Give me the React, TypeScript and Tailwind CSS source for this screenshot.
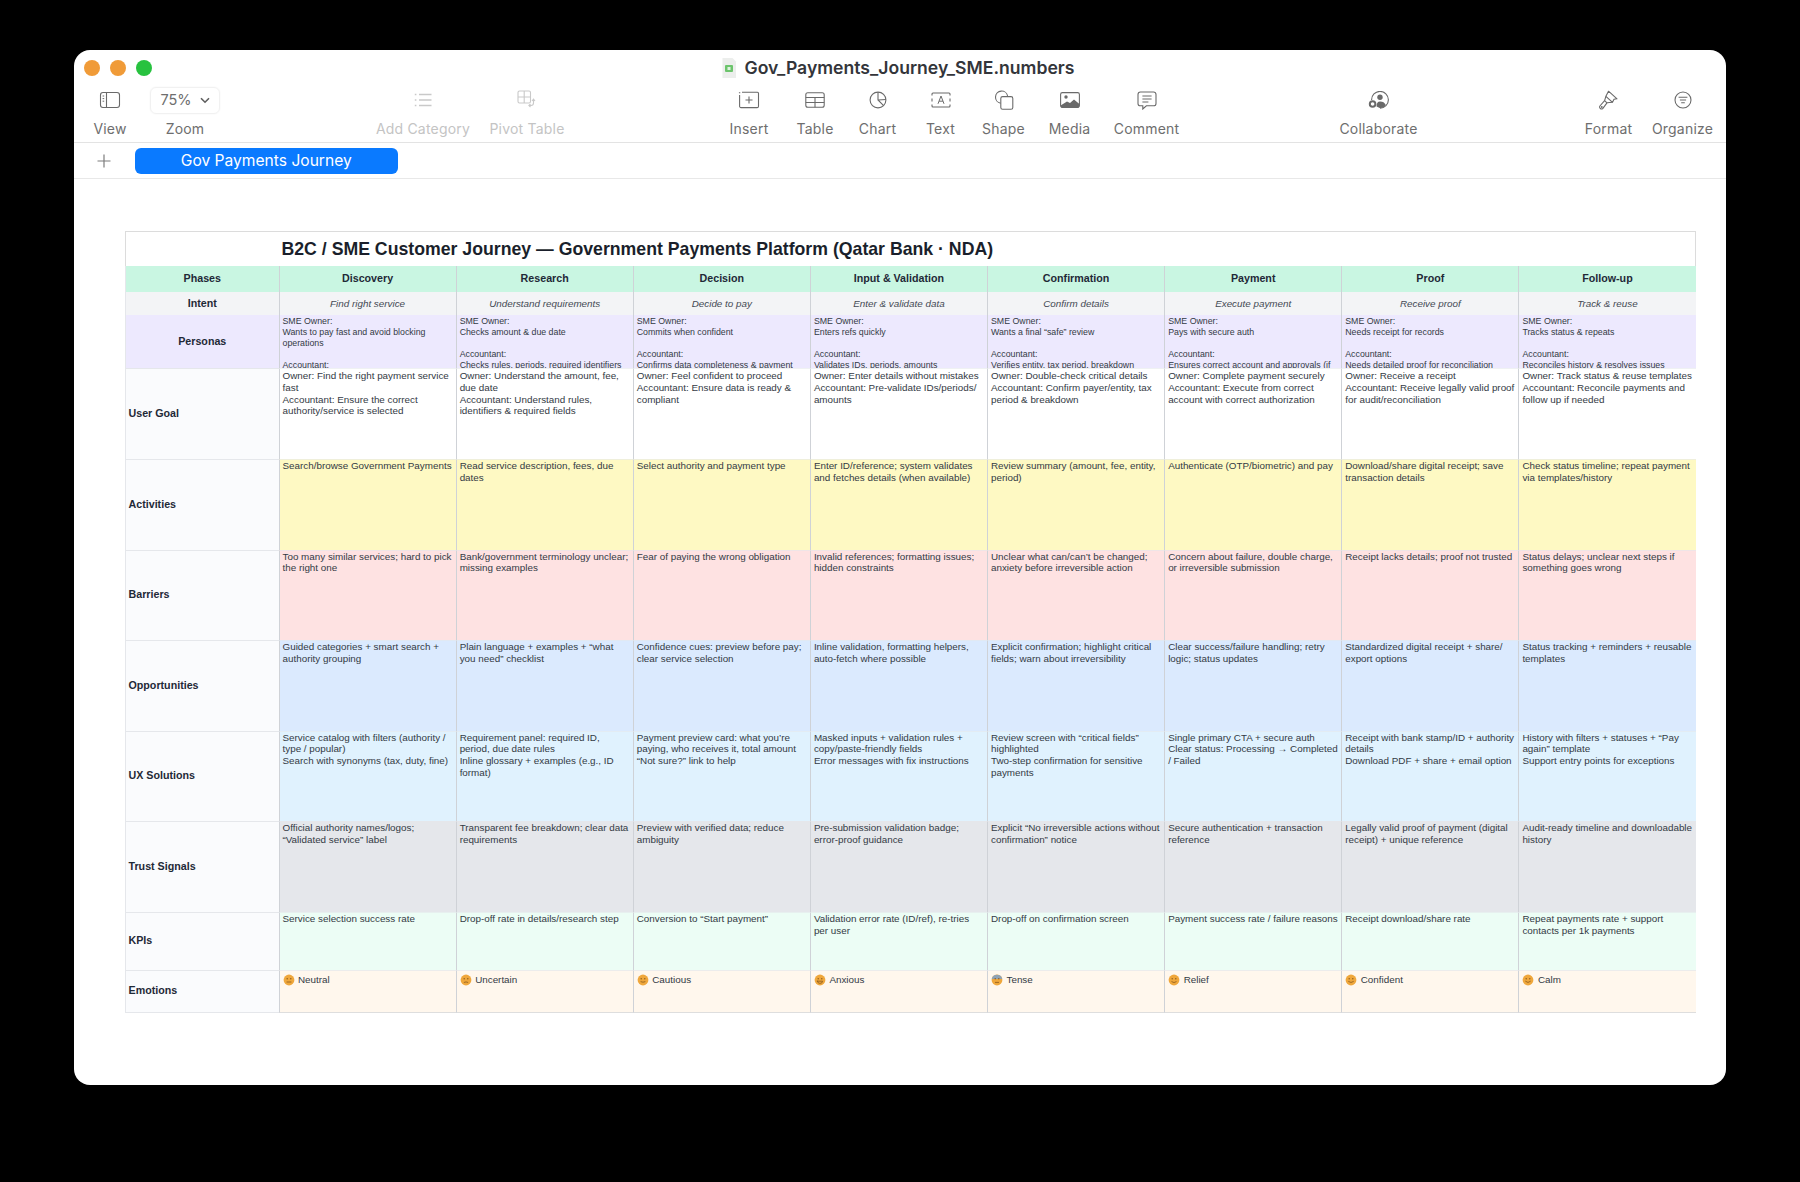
const phases = ["Discovery", "Research", "Decision", "Input & Validation", "Confirmation", "Payment", "Proof", "Follow-up"];

const intents = ["Find right service", "Understand requirements", "Decide to pay", "Enter & validate data", "Confirm details", "Execute payment", "Receive proof", "Track & reuse"];

const personas = [
  "SME Owner:\nWants to pay fast and avoid blocking operations\n\nAccountant:",
  "SME Owner:\nChecks amount & due date\n\nAccountant:\nChecks rules, periods, required identifiers",
  "SME Owner:\nCommits when confident\n\nAccountant:\nConfirms data completeness & payment",
  "SME Owner:\nEnters refs quickly\n\nAccountant:\nValidates IDs, periods, amounts",
  "SME Owner:\nWants a final “safe” review\n\nAccountant:\nVerifies entity, tax period, breakdown",
  "SME Owner:\nPays with secure auth\n\nAccountant:\nEnsures correct account and approvals (if",
  "SME Owner:\nNeeds receipt for records\n\nAccountant:\nNeeds detailed proof for reconciliation",
  "SME Owner:\nTracks status & repeats\n\nAccountant:\nReconciles history & resolves issues",
];

const rows = [
  {
    label: "User Goal",
    h: "h-[91px]",
    bg: "bg-white pt-[1px]",
    cells: [
      "Owner: Find the right payment service fast\nAccountant: Ensure the correct authority/service is selected",
      "Owner: Understand the amount, fee, due date\nAccountant: Understand rules, identifiers & required fields",
      "Owner: Feel confident to proceed\nAccountant: Ensure data is ready & compliant",
      "Owner: Enter details without mistakes\nAccountant: Pre-validate IDs/periods/ amounts",
      "Owner: Double-check critical details\nAccountant: Confirm payer/entity, tax period & breakdown",
      "Owner: Complete payment securely\nAccountant: Execute from correct account with correct authorization",
      "Owner: Receive a receipt\nAccountant: Receive legally valid proof for audit/reconciliation",
      "Owner: Track status & reuse templates\nAccountant: Reconcile payments and follow up if needed",
    ],
  },
  {
    label: "Activities",
    h: "h-[90.5px]",
    bg: "bg-[#fef9c3]",
    cells: [
      "Search/browse Government Payments",
      "Read service description, fees, due dates",
      "Select authority and payment type",
      "Enter ID/reference; system validates and fetches details (when available)",
      "Review summary (amount, fee, entity, period)",
      "Authenticate (OTP/biometric) and pay",
      "Download/share digital receipt; save transaction details",
      "Check status timeline; repeat payment via templates/history",
    ],
  },
  {
    label: "Barriers",
    h: "h-[90.5px]",
    bg: "bg-[#fee2e2]",
    cells: [
      "Too many similar services; hard to pick the right one",
      "Bank/government terminology unclear; missing examples",
      "Fear of paying the wrong obligation",
      "Invalid references; formatting issues; hidden constraints",
      "Unclear what can/can’t be changed; anxiety before irreversible action",
      "Concern about failure, double charge, or irreversible submission",
      "Receipt lacks details; proof not trusted",
      "Status delays; unclear next steps if something goes wrong",
    ],
  },
  {
    label: "Opportunities",
    h: "h-[90.5px]",
    bg: "bg-[#dbeafe]",
    cells: [
      "Guided categories + smart search + authority grouping",
      "Plain language + examples + “what you need” checklist",
      "Confidence cues: preview before pay; clear service selection",
      "Inline validation, formatting helpers, auto-fetch where possible",
      "Explicit confirmation; highlight critical fields; warn about irreversibility",
      "Clear success/failure handling; retry logic; status updates",
      "Standardized digital receipt + share/ export options",
      "Status tracking + reminders + reusable templates",
    ],
  },
  {
    label: "UX Solutions",
    h: "h-[90.5px]",
    bg: "bg-[#e0f2fe]",
    cells: [
      "Service catalog with filters (authority / type / popular)\nSearch with synonyms (tax, duty, fine)",
      "Requirement panel: required ID, period, due date rules\nInline glossary + examples (e.g., ID format)",
      "Payment preview card: what you’re paying, who receives it, total amount\n“Not sure?” link to help",
      "Masked inputs + validation rules + copy/paste-friendly fields\nError messages with fix instructions",
      "Review screen with “critical fields” highlighted\nTwo-step confirmation for sensitive payments",
      "Single primary CTA + secure auth\nClear status: Processing → Completed / Failed",
      "Receipt with bank stamp/ID + authority details\nDownload PDF + share + email option",
      "History with filters + statuses + “Pay again” template\nSupport entry points for exceptions",
    ],
  },
  {
    label: "Trust Signals",
    h: "h-[91px]",
    bg: "bg-[#e5e7eb]",
    cells: [
      "Official authority names/logos; “Validated service” label",
      "Transparent fee breakdown; clear data requirements",
      "Preview with verified data; reduce ambiguity",
      "Pre-submission validation badge; error-proof guidance",
      "Explicit “No irreversible actions without confirmation” notice",
      "Secure authentication + transaction reference",
      "Legally valid proof of payment (digital receipt) + unique reference",
      "Audit-ready timeline and downloadable history",
    ],
  },
  {
    label: "KPIs",
    h: "h-[58px]",
    bg: "bg-[#ecfdf5]",
    cells: [
      "Service selection success rate",
      "Drop-off rate in details/research step",
      "Conversion to “Start payment”",
      "Validation error rate (ID/ref), re-tries per user",
      "Drop-off on confirmation screen",
      "Payment success rate / failure reasons",
      "Receipt download/share rate",
      "Repeat payments rate + support contacts per 1k payments",
    ],
  },
];

const emotions = [
  { text: "Neutral", mouth: "M4 8h4" },
  { text: "Uncertain", mouth: "M4.2 8.3q1.8-1 3.6 0" },
  { text: "Cautious", mouth: "M4 7.8q2 1 4 0" },
  { text: "Anxious", mouth: "M3.4 7.2h5.2q-.2 2.2-2.6 2.2t-2.6-2.2z" },
  { text: "Tense", mouth: "M4.4 8.4h3.2" },
  { text: "Relief", mouth: "M3.8 7.8q2.2 1.8 4.4 0" },
  { text: "Confident", mouth: "M3.6 7.6q2.4 2 4.8 0" },
  { text: "Calm", mouth: "M3.6 7.4q2.4 2.4 4.8 0" },
];

function Face({ mouth, tense }: { mouth: string; tense: boolean }) {
  return (
    <svg width="12" height="12" viewBox="0 0 12 12" className="shrink-0">
      <circle cx="6" cy="6" r="5.4" fill="#efa73c" />
      {tense && <path d="M.7 5a5.4 5.4 0 0 1 10.6 0z" fill="#8fa3b5" />}
      <circle cx="4.2" cy="4.8" r=".7" fill="#8a5a1c" />
      <circle cx="7.8" cy="4.8" r=".7" fill="#8a5a1c" />
      <path d={mouth} fill="none" stroke="#8a5a1c" strokeWidth=".8" strokeLinecap="round" />
    </svg>
  );
}

const dark = "#6a6a6a";
const faint = "#c9c9c9";

function ViewIcon() {
  return (
    <svg width="22" height="18" viewBox="0 0 22 18" fill="none" stroke={dark} strokeWidth="1.1">
      <rect x="1.5" y="1.5" width="19" height="15" rx="2.5" />
      <path d="M7.5 1.5v15" />
      <path d="M3.6 5h1.6M3.6 7.6h1.6M3.6 10.2h1.6" strokeWidth="1" />
    </svg>
  );
}

function CategoryIcon() {
  return (
    <svg width="18" height="16" viewBox="0 0 18 16" fill="none" stroke={faint} strokeWidth="1.3">
      <path d="M5 2.5h12.5M5 8h12.5M5 13.5h12.5" />
      <path d="M.8 2.5h1.6M.8 8h1.6M.8 13.5h1.6" strokeWidth="1.6" />
    </svg>
  );
}

function PivotIcon() {
  return (
    <svg width="20" height="20" viewBox="0 0 20 20" fill="none" stroke={faint} strokeWidth="1.1">
      <rect x="1" y="1" width="12.5" height="12" rx="1.5" />
      <path d="M7.2 1v12M1 7h12.5" />
      <path d="M16.5 9.5v3.5q0 2.5-2.5 2.5h-1.5M15 11l1.5-1.8L18 11M13.5 14l-1.6 1.5 1.6 1.5" />
    </svg>
  );
}

function InsertIcon() {
  return (
    <svg width="22" height="18" viewBox="0 0 22 18" fill="none" stroke={dark} strokeWidth="1.1">
      <path d="M4 1.2h15.5a1 1 0 0 1 1 1v13a1.4 1.4 0 0 1-1.4 1.4H3a1.4 1.4 0 0 1-1.4-1.4V4" />
      <path d="M1.6 1.2v1" strokeWidth="1.4" />
      <path d="M11 5.4v7M7.5 9h7" />
    </svg>
  );
}

function TableIcon() {
  return (
    <svg width="20" height="16" viewBox="0 0 20 16" fill="none" stroke={dark} strokeWidth="1.1">
      <rect x=".8" y=".8" width="18.4" height="14.4" rx="2" />
      <path d="M.8 5.5h18.4M.8 10.5h18.4M10 5.5v9.7" />
    </svg>
  );
}

function ChartIcon() {
  return (
    <svg width="18" height="18" viewBox="0 0 18 18" fill="none" stroke={dark} strokeWidth="1.1">
      <circle cx="9" cy="9" r="7.9" />
      <path d="M9 1.1V9l5.6 5.6M9 9l7.9-.5" />
    </svg>
  );
}

function TextIcon() {
  return (
    <svg width="20" height="16" viewBox="0 0 20 16" fill="none" stroke={dark} strokeWidth="1.1">
      <path d="M1 3.5V2a1 1 0 0 1 1-1h16a1 1 0 0 1 1 1v1.5M1 12.5V14a1 1 0 0 0 1 1h16a1 1 0 0 0 1-1v-1.5M1 6.5v3M19 6.5v3" />
      <path d="M7 11.8 10 4l3 7.8M8.1 9.2h3.8" strokeWidth="1" />
    </svg>
  );
}

function ShapeIcon() {
  return (
    <svg width="20" height="20" viewBox="0 0 20 20" fill="none" stroke={dark} strokeWidth="1.1">
      <path d="M6.6 13.2A6.1 6.1 0 1 1 13.6 6" />
      <rect x="6.8" y="6.6" width="12" height="12.6" rx="1.8" />
    </svg>
  );
}

function MediaIcon() {
  return (
    <svg width="20" height="16" viewBox="0 0 20 16">
      <rect x=".6" y=".6" width="18.8" height="14.8" rx="1.8" fill="#fff" stroke={dark} strokeWidth="1.1" />
      <circle cx="6" cy="5" r="1.7" fill={dark} />
      <path d="M.6 13.5 7 9.5l3 1.6 4-3.6 5.4 4.5v2.2a1.8 1.8 0 0 1-1.8 1.8H2.4a1.8 1.8 0 0 1-1.8-1.8z" fill={dark} />
    </svg>
  );
}

function CommentIcon() {
  return (
    <svg width="20" height="19" viewBox="0 0 20 19" fill="none" stroke={dark} strokeWidth="1.1">
      <path d="M3.4 1h13.2A2.4 2.4 0 0 1 19 3.4v9a2.4 2.4 0 0 1-2.4 2.4H9.4L5.8 18v-3.2H3.4A2.4 2.4 0 0 1 1 12.4v-9A2.4 2.4 0 0 1 3.4 1z" />
      <path d="M5.4 5h9.2M5.4 8h9.2M5.4 11h6" strokeWidth="1" />
    </svg>
  );
}

function CollaborateIcon() {
  return (
    <svg width="21" height="18" viewBox="0 0 21 18" fill="none" stroke={dark} strokeWidth="1.1">
      <path d="M3.6 9A8.4 8.4 0 1 1 12 17.2" />
      <circle cx="12" cy="6.2" r="2.7" fill={dark} stroke="none" />
      <path d="M8.6 15.6q-.2-5 3.6-5t5.6 3.4q-2 3-5.6 3.2z" fill={dark} stroke="none" />
      <circle cx="4.6" cy="13" r="2.8" strokeWidth="2" />
    </svg>
  );
}

function FormatIcon() {
  return (
    <svg width="19" height="20" viewBox="0 0 19 20" fill="none" stroke={dark} strokeWidth="1.1" strokeLinejoin="round">
      <path d="M9.5 1.2 18 8.8l-3 .5-1.5 3-6.6-6z" />
      <path d="M6.9 6.3 5.6 10.6l2.4 2.2 5.5-.5" />
      <path d="M5.6 10.6.9 16a2 2 0 0 0 2.6 2.8L8 12.8" />
      <circle cx="2.8" cy="17" r=".9" fill={dark} stroke="none" />
    </svg>
  );
}

function OrganizeIcon() {
  return (
    <svg width="18" height="18" viewBox="0 0 18 18" fill="none" stroke={dark} strokeWidth="1.1">
      <circle cx="9" cy="9" r="8" />
      <path d="M4.6 6.3h8.8M5.9 9h6.2M7.2 11.7h3.6" />
    </svg>
  );
}

const tools = [
  { label: "Add Category", icon: <CategoryIcon />, box: "w-[100px] ml-[152px]", muted: true },
  { label: "Pivot Table", icon: <PivotIcon />, box: "w-[80px] ml-[14px]", muted: true },
  { label: "Insert", icon: <InsertIcon />, box: "w-[52px] ml-[156px]" },
  { label: "Table", icon: <TableIcon />, box: "w-[52px] ml-[14px]" },
  { label: "Chart", icon: <ChartIcon />, box: "w-[52px] ml-[10.5px]" },
  { label: "Text", icon: <TextIcon />, box: "w-[40px] ml-[17px]" },
  { label: "Shape", icon: <ShapeIcon />, box: "w-[52px] ml-[17px]" },
  { label: "Media", icon: <MediaIcon />, box: "w-[52px] ml-[14px]" },
  { label: "Comment", icon: <CommentIcon />, box: "w-[74px] ml-[14px]" },
  { label: "Collaborate", icon: <CollaborateIcon />, box: "w-[90px] ml-[150px]" },
  { label: "Format", icon: <FormatIcon />, box: "w-[60px] ml-[155px]" },
  { label: "Organize", icon: <OrganizeIcon />, box: "w-[70px] ml-[9px]" },
];

function Tool({ label, icon, box, muted }: { label: string; icon: React.ReactNode; box: string; muted?: boolean }) {
  return (
    <div className={`flex flex-col items-center shrink-0 ${box}`}>
      <div className="h-[24px] flex items-center justify-center">{icon}</div>
      <div className={`mt-[8px] text-[14px] leading-[18px] whitespace-nowrap tracking-[0.2px] ${muted ? "text-[#c4c4c4]" : "text-[#6e6e6e]"}`}>{label}</div>
    </div>
  );
}

const labelCell = "flex items-center pl-[2.5px] pb-[2px] bg-[#fafbfd] border-l border-t border-[#e5e7eb] font-bold text-[10.7px] text-[#1f2937]";
const bodyCell = "px-[3px] overflow-hidden whitespace-pre-line text-[9.85px] leading-[11.8px] text-[#333a44] border-l-[1.5px] border-l-[#cfd2d7] border-t border-t-[#e5e7eb]/60";

export default function App() {
  return (
    <div className="w-[1800px] h-[1182px] bg-black pt-[50px] pl-[74px] overflow-hidden font-['Inter',sans-serif]">
      <div className="w-[1652px] h-[1035px] bg-white rounded-[16px] overflow-hidden flex flex-col">
        {/* title bar */}
        <div className="h-[33px] flex items-center justify-center shrink-0 pt-[3px] relative">
          <div className="flex items-center gap-[8px] ml-[-5px]">
            <svg width="16" height="20" viewBox="0 0 16 20">
              <path d="M1.5 0h10L15 3.5V20H1.5z" fill="#eceeec" />
              <rect x="4" y="7" width="8" height="7" rx="1" fill="#6cc46c" />
              <rect x="6.5" y="9" width="3" height="3" fill="#dff3df" />
            </svg>
            <span className="text-[17.6px] font-semibold text-[#33353a] leading-[20px]">Gov_Payments_Journey_SME.numbers</span>
          </div>
          <div className="absolute left-[10px] top-[10px] flex gap-[10px]">
            <span className="w-[16px] h-[16px] rounded-full bg-[#f09b38]" />
            <span className="w-[16px] h-[16px] rounded-full bg-[#f09b38]" />
            <span className="w-[16px] h-[16px] rounded-full bg-[#27c23f]" />
          </div>
        </div>

        {/* toolbar */}
        <div className="h-[60px] flex items-start pl-[16px] pt-[5px] border-b border-[#e3e3e3] shrink-0">
          <Tool label="View" icon={<ViewIcon />} box="w-[40px]" />
          <div className="flex flex-col items-center w-[72px] ml-[19px] shrink-0">
            <div className="h-[26.5px] w-[70px] mt-[-1px] rounded-[6px] border border-[#f1f1f1] shadow-[0_0_2px_rgba(0,0,0,0.05)] flex items-center justify-center gap-[8px] text-[14.5px] text-[#6e6e6e]">
              75%
              <svg width="10" height="7" viewBox="0 0 10 7" fill="none" stroke="#5f5f5f" strokeWidth="1.6">
                <path d="M1 1.2 5 5.2l4-4" />
              </svg>
            </div>
            <div className="mt-[6.5px] text-[14px] leading-[18px] tracking-[0.2px] text-[#6e6e6e]">Zoom</div>
          </div>
          {tools.map((t) => (
            <Tool key={t.label} label={t.label} icon={t.icon} box={t.box} muted={t.muted} />
          ))}
        </div>

        {/* sheet tabs */}
        <div className="h-[36px] flex items-center border-b border-[#e8e8e8] shrink-0">
          <svg width="14" height="14" viewBox="0 0 14 14" className="ml-[23px]" fill="none" stroke="#7c7c7c" strokeWidth="1.2">
            <path d="M7 .5v13M.5 7h13" />
          </svg>
          <div className="ml-[24px] w-[262.5px] h-[26px] rounded-[6px] bg-[#0a7aff] text-white text-[15.6px] leading-[26px] text-center">Gov Payments Journey</div>
        </div>

        {/* journey table */}
        <div className="ml-[51px] mt-[51.5px] w-[1570.5px] font-['Liberation_Sans',Arial,sans-serif]">
          <div className="h-[35px] flex items-center pl-[155.5px] pt-[1px] border border-b-0 border-[#dcdcdc] text-[17.7px] font-bold text-[#1a1f2b] whitespace-nowrap">
            B2C / SME Customer Journey — Government Payments Platform (Qatar Bank · NDA)
          </div>

          <div className="grid grid-cols-[153.5px_repeat(8,177.125px)]">
            <div className="h-[26.5px] flex items-center justify-center pb-[1px] bg-[#c9f6e2] border-l border-[#e5e7eb] font-bold text-[10.7px] text-[#1f2937]">Phases</div>
            {phases.map((p) => (
              <div key={p} className="h-[26.5px] flex items-center justify-center pb-[1px] bg-[#c9f6e2] border-l-[1.5px] border-[#cfd2d7] font-bold text-[10.7px] text-[#1f2937]">{p}</div>
            ))}

            <div className="h-[23px] flex items-center justify-center bg-[#f3f4f6] border-l border-[#e5e7eb] font-bold text-[10.7px] text-[#1f2937]">Intent</div>
            {intents.map((p) => (
              <div key={p} className="h-[23px] flex items-center justify-center pt-[1px] bg-[#f3f4f6] border-l-[1.5px] border-[#cfd2d7] italic text-[9.85px] text-[#444a54]">{p}</div>
            ))}

            <div className="h-[53px] flex items-center justify-center bg-[#ede9fe] border-l border-[#e5e7eb] font-bold text-[10.7px] text-[#1f2937]">Personas</div>
            {personas.map((p, i) => (
              <div key={i} className="h-[53px] bg-[#ede9fe] px-[3px] pt-[1.3px] overflow-hidden whitespace-pre-line text-[8.8px] leading-[10.85px] text-[#333a44] border-l-[1.5px] border-[#cfd2d7]">{p}</div>
            ))}

            {rows.map((row) => [
              <div key={row.label} className={`${row.h} ${labelCell}`}>{row.label}</div>,
              ...row.cells.map((c, i) => (
                <div key={row.label + i} className={`${row.h} ${row.bg} ${bodyCell}`}>{c}</div>
              )),
            ])}

            <div className={`h-[43px] border-b ${labelCell}`}>Emotions</div>
            {emotions.map((e) => (
              <div key={e.text} className="h-[43px] bg-[#fff7ed] border-l-[1.5px] border-l-[#cfd2d7] border-t border-t-[#ececec] border-b border-b-[#dedede] px-[3px] pt-[3px] flex items-start gap-[3.5px] text-[9.85px] leading-[12px] text-[#333a44]">
                <Face mouth={e.mouth} tense={e.text === "Tense"} />
                {e.text}
              </div>
            ))}
          </div>
        </div>
      </div>
    </div>
  );
}
